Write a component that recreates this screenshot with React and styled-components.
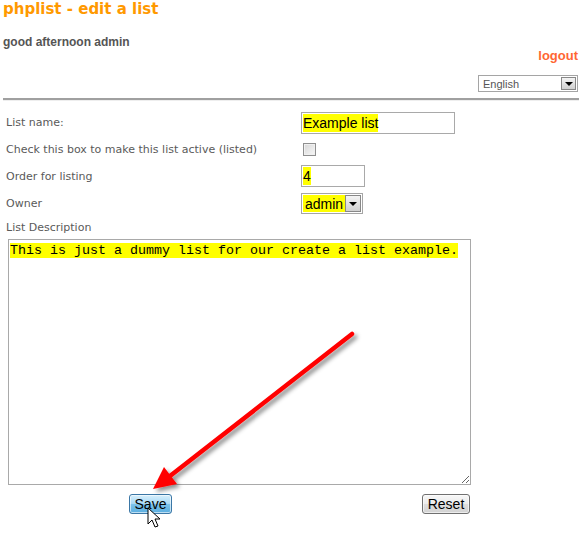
import React from 'react'
import styled, {createGlobalStyle} from 'styled-components'

const GlobalStyle = createGlobalStyle`
  html, body {
    margin: 0;
    padding: 0;
    background: #fff;
  }
`

const Page = styled.div`
  position: relative;
  width: 579px;
  height: 534px;
  overflow: hidden;
  font-family: "DejaVu Sans", Verdana, sans-serif;
`

const Title = styled.h1`
  margin: 0;
  padding-left: 3px;
  font-size: 15px;
  line-height: 18px;
  font-weight: bold;
  color: #ff9900;
`

const Greeting = styled.div`
  margin-top: 18px;
  padding-left: 3px;
  font-family: "Liberation Sans", Arial, sans-serif;
  font-size: 12px;
  line-height: 12px;
  font-weight: bold;
  color: #555;
`

const Logout = styled.div`
  margin-top: 0px;
  text-align: right;
  padding-right: 1px;
  font-family: "Liberation Sans", Arial, sans-serif;
  font-size: 13px;
  line-height: 15px;
  font-weight: bold;
  color: #ff6633;
`

const LangRow = styled.div`
  display: flex;
  justify-content: flex-end;
  padding-right: 1px;
  margin-top: 12px;
`

const Rule = styled.hr`
  margin: 6px 0 0 3px;
  height: 0;
  border: none;
  border-top: 2px solid #a0a0a0;
  border-left: 1px solid #a0a0a0;
  box-shadow: 0 1px 0 #eee;
`

const Form = styled.div`
  margin-top: 9px;
`

const Row = styled.div`
  display: grid;
  grid-template-columns: 295px auto;
  align-items: center;
  height: ${p => p.h}px;
  padding-left: 6px;
`

const Label = styled.div`
  font-size: 11px;
  color: #5a5a5a;
`

const Field = styled.div`
  box-sizing: border-box;
  width: ${p => p.w}px;
  height: ${p => p.h}px;
  border: 1px solid #a9a9a9;
  padding: 1px;
  display: flex;
  align-items: stretch;
  font-family: "Liberation Sans", Arial, sans-serif;
  font-size: 14px;
  color: #000;
  background: #fff;
`

const Mark = styled.span`
  background: #ffff00;
  display: flex;
  align-items: center;
  padding: 0 ${p => p.pad || 0}px;
`

const Check = styled.div`
  margin-left: 2px;
  width: 13px;
  height: 13px;
  box-sizing: border-box;
  border: 1px solid #8f8f8f;
  background: linear-gradient(135deg, #d6d6d6, #f8f8f8);
  box-shadow: inset 0 0 0 1px #f0f0f0;
`

const DropButton = styled.div`
  margin-left: auto;
  width: ${p => p.w}px;
  box-sizing: border-box;
  border: 1px solid #888;
  background: linear-gradient(#f4f4f4, #d0d0d0);
  display: flex;
  align-items: center;
  justify-content: center;
  &::after {
    content: "";
    border-left: 4px solid transparent;
    border-right: 4px solid transparent;
    border-top: 4px solid #000;
    margin-top: 1px;
  }
`

const Select = styled.div`
  box-sizing: border-box;
  width: ${p => p.w}px;
  height: ${p => p.h}px;
  border: 1px solid #a5a5a5;
  padding: 1px;
  display: flex;
  align-items: stretch;
  font-family: "Liberation Sans", Arial, sans-serif;
  font-size: ${p => p.fs}px;
  color: ${p => p.color};
  background: #fff;
`

const SelectText = styled.span`
  display: flex;
  align-items: center;
  padding-left: 3px;
`

const TextArea = styled.div`
  box-sizing: border-box;
  margin: 3px 0 0 8px;
  width: 463px;
  height: 246px;
  border: 1px solid #a9a9a9;
  padding: 3px 1px;
  font-family: "Liberation Mono", "Courier New", monospace;
  font-size: 13.33px;
  line-height: 16px;
  color: #000;
  overflow: auto;
  resize: both;
  span {
    background: #ffff00;
  }
`

const Buttons = styled.div`
  display: flex;
  justify-content: space-between;
  width: 470px;
  box-sizing: border-box;
  padding-left: 129px;
  margin-top: 9px;
`

const Button = styled.div`
  box-sizing: border-box;
  height: 20px;
  width: ${p => p.w}px;
  border: 1px solid ${p => (p.primary ? '#3b77a6' : '#707070')};
  border-radius: 3px;
  background: ${p => p.primary
    ? 'linear-gradient(#d7effc 0%, #a9d9f5 48%, #7cc2ea 52%, #5aaee0 100%)'
    : 'linear-gradient(#f7f7f7 0%, #ececec 48%, #dedede 52%, #d2d2d2 100%)'};
  box-shadow: inset 0 0 0 1px rgba(255, 255, 255, 0.6);
  display: flex;
  align-items: center;
  justify-content: center;
  font-family: "Liberation Sans", Arial, sans-serif;
  font-size: 14px;
  color: #000;
`

const Overlay = styled.svg`
  position: absolute;
  left: 0;
  top: 0;
  pointer-events: none;
`

function ArrowAndCursor() {
  return (
    <Overlay width="579" height="534" viewBox="0 0 579 534">
      <defs>
        <filter id="shadow" x="-20%" y="-20%" width="140%" height="140%">
          <feDropShadow dx="3" dy="3" stdDeviation="2" floodColor="#000" floodOpacity="0.45" />
        </filter>
      </defs>
      <g filter="url(#shadow)">
        <line x1="352" y1="334" x2="170" y2="476" stroke="#ff0000" strokeWidth="4.5" strokeLinecap="round" />
        <polygon points="153,489 164,467 177,484" fill="#ff0000" />
      </g>
      <path
        d="M148 508 L148 524 L152 520 L155 527 L158 526 L155 519 L160 519 Z"
        fill="#fff"
        stroke="#000"
        strokeWidth="1"
        strokeLinejoin="miter"
      />
    </Overlay>
  )
}

export default function App() {
  return (
    <>
      <GlobalStyle />
      <Page>
        <Title>phplist - edit a list</Title>
        <Greeting>good afternoon admin</Greeting>
        <Logout>logout</Logout>
        <LangRow>
          <Select w={100} h={17} fs={11} color="#555">
            <SelectText>English</SelectText>
            <DropButton w={15} />
          </Select>
        </LangRow>
        <Rule />
        <Form>
          <Row h={27}>
            <Label>List name:</Label>
            <Field w={154} h={22}>
              <Mark>Example list</Mark>
            </Field>
          </Row>
          <Row h={27}>
            <Label>Check this box to make this list active (listed)</Label>
            <Check />
          </Row>
          <Row h={26}>
            <Label>Order for listing</Label>
            <Field w={64} h={22}>
              <Mark>4</Mark>
            </Field>
          </Row>
          <Row h={29}>
            <Label>Owner</Label>
            <Select w={62} h={21} fs={14} color="#000">
              <Mark pad={2}>admin</Mark>
              <DropButton w={16} />
            </Select>
          </Row>
          <Row h={18}>
            <Label>List Description</Label>
          </Row>
        </Form>
        <TextArea>
          <span>This is just a dummy list for our create a list example.</span>
        </TextArea>
        <Buttons>
          <Button primary w={43}>Save</Button>
          <Button w={48}>Reset</Button>
        </Buttons>
        <ArrowAndCursor />
      </Page>
    </>
  )
}
